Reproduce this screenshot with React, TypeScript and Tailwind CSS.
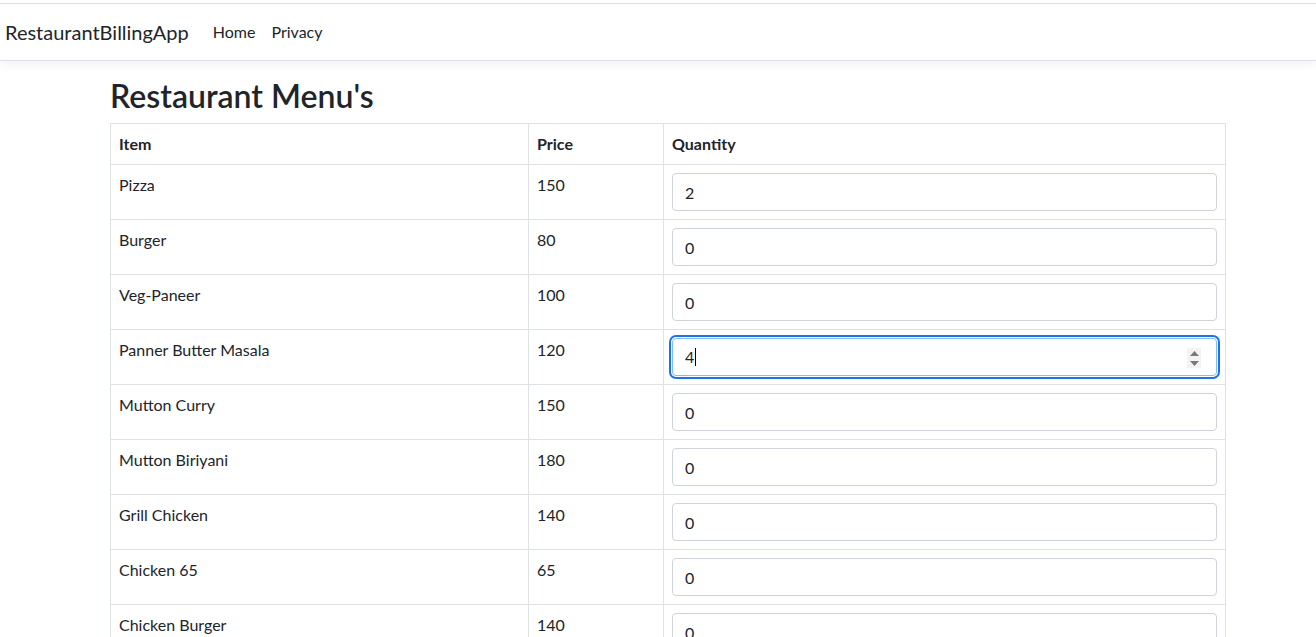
import React from 'react';

const items = [
  { name: 'Pizza', price: 150, qty: '2' },
  { name: 'Burger', price: 80, qty: '0' },
  { name: 'Veg-Paneer', price: 100, qty: '0' },
  { name: 'Panner Butter Masala', price: 120, qty: '4', focused: true },
  { name: 'Mutton Curry', price: 150, qty: '0' },
  { name: 'Mutton Biriyani', price: 180, qty: '0' },
  { name: 'Grill Chicken', price: 140, qty: '0' },
  { name: 'Chicken 65', price: 65, qty: '0' },
  { name: 'Chicken Burger', price: 140, qty: '0' },
];

const QtyInput = ({ value, focused = false }: { value: string; focused?: boolean }) => {
  if (focused) {
    return (
      <div className="relative flex items-center h-[38px] w-full rounded-[4px] border border-[#80bdff] bg-white px-3 shadow-[0_0_0_1px_#ffffff,0_0_0_3px_#1a73e8]">
        <span className="leading-6">{value}</span>
        <span className="ml-[1px] h-[18px] w-px bg-black" />
        <div className="absolute right-[15px] top-[9px] flex h-[20px] w-[14px] flex-col items-center justify-center gap-[5px] bg-[#f3f3f3]">
          <svg width="9" height="5" viewBox="0 0 9 5"><path d="M0 5 L4.5 0 L9 5 Z" fill="#7a7a7a" /></svg>
          <svg width="9" height="5" viewBox="0 0 9 5"><path d="M0 0 L4.5 5 L9 0 Z" fill="#7a7a7a" /></svg>
        </div>
      </div>
    );
  }
  return (
    <input
      type="text"
      readOnly
      value={value}
      className="block h-[38px] w-full rounded-[4px] border border-[#ced4da] bg-white px-3 text-[16px] leading-6 text-[#212529] outline-none"
    />
  );
};

export default function App() {
  return (
    <div className="min-h-screen bg-white text-[#212529]" style={{ fontFamily: 'Lato, "Noto Sans", Arial, sans-serif' }}>
      <div className="h-[3px]" />
      {/* Navbar */}
      <header className="flex h-[58px] items-center border-y border-[#dee2e6] bg-white pl-[5px] shadow-[0_4px_10px_rgba(0,0,0,0.05)]">
        <span className="mr-[16px] text-[20px] leading-[30px]">RestaurantBillingApp</span>
        <nav className="flex items-center text-[16px] leading-6">
          <a className="px-2">Home</a>
          <a className="px-2">Privacy</a>
        </nav>
      </header>

      <main className="ml-[110px] w-[1116px] pt-[16px]">
        <h2 className="mb-[8px] text-[32px] font-semibold leading-[1.2]">Restaurant Menu's</h2>
        <table className="w-full table-fixed border-collapse border border-[#dee2e6] text-[16px] leading-6">
          <colgroup>
            <col className="w-[418px]" />
            <col className="w-[135px]" />
            <col />
          </colgroup>
          <thead>
            <tr>
              <th className="border border-[#dee2e6] px-2 py-2 text-left align-bottom font-bold">Item</th>
              <th className="border border-[#dee2e6] px-2 py-2 text-left align-bottom font-bold">Price</th>
              <th className="border border-[#dee2e6] px-2 py-2 text-left align-bottom font-bold">Quantity</th>
            </tr>
          </thead>
          <tbody>
            {items.map((it) => (
              <tr key={it.name}>
                <td className="border border-[#dee2e6] p-2 align-top">{it.name}</td>
                <td className="border border-[#dee2e6] p-2 align-top">{it.price}</td>
                <td className="border border-[#dee2e6] p-2 align-top">
                  <QtyInput value={it.qty} focused={it.focused} />
                </td>
              </tr>
            ))}
          </tbody>
        </table>
      </main>
    </div>
  );
}
